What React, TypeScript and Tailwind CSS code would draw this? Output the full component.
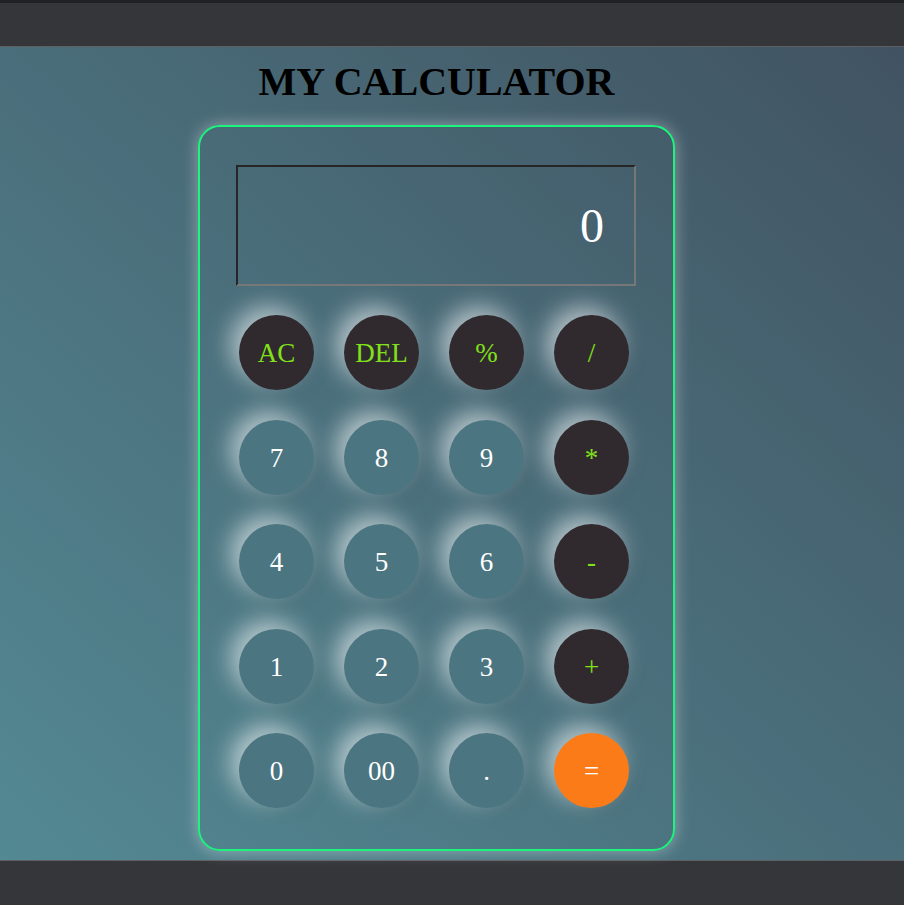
const keys: { label: string; kind: 'op' | 'num' | 'eq' }[] = [
  { label: 'AC', kind: 'op' },
  { label: 'DEL', kind: 'op' },
  { label: '%', kind: 'op' },
  { label: '/', kind: 'op' },
  { label: '7', kind: 'num' },
  { label: '8', kind: 'num' },
  { label: '9', kind: 'num' },
  { label: '*', kind: 'op' },
  { label: '4', kind: 'num' },
  { label: '5', kind: 'num' },
  { label: '6', kind: 'num' },
  { label: '-', kind: 'op' },
  { label: '1', kind: 'num' },
  { label: '2', kind: 'num' },
  { label: '3', kind: 'num' },
  { label: '+', kind: 'op' },
  { label: '0', kind: 'num' },
  { label: '00', kind: 'num' },
  { label: '.', kind: 'num' },
  { label: '=', kind: 'eq' },
];

function Key({ label, kind }: { label: string; kind: 'op' | 'num' | 'eq' }) {
  const tone =
    kind === 'op'
      ? 'bg-[#302a2e] text-[#80e01c]'
      : kind === 'eq'
        ? 'bg-[#fb7b18] text-white'
        : 'bg-[#4b7580] text-white';
  return (
    <button
      className={`flex h-[75px] w-[75px] items-center justify-center rounded-full pt-[2px] text-[27px] leading-none shadow-[-8px_-8px_24px_rgba(255,255,255,0.6),6px_6px_16px_rgba(0,0,0,0.06)] ${tone}`}
    >
      {label}
    </button>
  );
}

export default function App() {
  return (
    <div className="min-h-[906px] w-full font-['Liberation_Serif',serif]">
      {/* top chrome */}
      <div className="h-[3px] bg-[#202124]" />
      <div className="h-[44px] border-b border-[#5f6064] bg-[#35363a]" />

      <main className="flex h-[813px] flex-col items-center bg-[linear-gradient(to_top_right,#538993,#415362)] pr-[31px]">
        <h1 className="mt-[12px] text-[40px] font-bold leading-[46px] text-black">MY CALCULATOR</h1>

        <div className="mt-[20px] w-[477px] rounded-[22px] border-2 border-[#1cf57c] pt-[38px] pr-[37px] pb-[41px] pl-[36px] shadow-[0_0_16px_rgba(255,255,255,0.4)]">
          <div className="flex h-[121px] w-[400px] items-center justify-end border-2 border-t-[#262626] border-l-[#262626] border-b-[#777777] border-r-[#777777] pr-[30px] text-[48px] leading-none text-white">
            0
          </div>

          <div className="mt-[29px] ml-[3px] grid grid-cols-[repeat(4,75px)] gap-x-[30px] gap-y-[29.5px]">
            {keys.map((k) => (
              <Key key={k.label} label={k.label} kind={k.kind} />
            ))}
          </div>
        </div>
      </main>

      {/* bottom chrome */}
      <div className="h-[45px] border-t border-[#5f6064] bg-[#35363a]" />
    </div>
  );
}
